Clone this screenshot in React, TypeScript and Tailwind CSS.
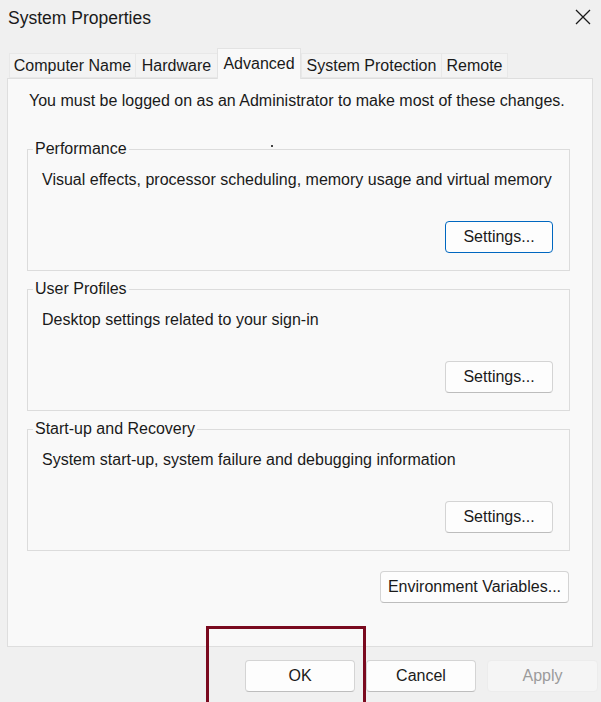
import React from 'react';

const font = { fontFamily: '"Liberation Sans", Arial, sans-serif' };

function Button({ label, focused, disabled, className = '' }: { label: string; focused?: boolean; disabled?: boolean; className?: string }) {
  return (
    <button
      className={
        'flex h-[32px] items-center justify-center rounded-[4px] border text-[16px] ' +
        (focused
          ? 'border-[#0067c0] bg-[#fdfdfd] text-[#1a1a1a] '
          : disabled
            ? 'border-[#ececec] bg-[#f5f5f5] text-[#9b9b9b] '
            : 'border-[#d4d4d4] border-b-[#bdbdbd] bg-[#fdfdfd] text-[#1a1a1a] ') +
        className
      }
    >
      {label}
    </button>
  );
}

function Group({ title, text, focused }: { title: string; text: string; focused?: boolean }) {
  return (
    <div className="relative ml-[19px] mr-[22px] h-[122px] border border-[#dcdcdc]">
      <span className="absolute left-[5px] top-[-10px] bg-[#f9f9f9] px-[2px] text-[16px] leading-[18px] text-[#1a1a1a]">
        {title}
      </span>
      <div className="pl-[14px] pt-[21px] text-[16px] leading-[18px] text-[#1a1a1a]">{text}</div>
      <div className="mt-[32px] flex justify-end pr-[16px]">
        <Button label="Settings..." focused={focused} className="w-[108px]" />
      </div>
    </div>
  );
}

const tabs = [
  { label: 'Computer Name', w: 'w-[126px]' },
  { label: 'Hardware', w: 'w-[82px]' },
  { label: 'Advanced', w: 'w-[84px]', active: true },
  { label: 'System Protection', w: 'w-[140px]' },
  { label: 'Remote', w: 'w-[67px]' },
];

export default function App() {
  return (
    <div className="relative h-[702px] w-[601px] overflow-hidden bg-[#f0f0f0]" style={font}>
      {/* title bar */}
      <div className="flex h-[36px] items-center justify-between pl-[8px] pr-[10px]">
        <span className="text-[17.5px] text-[#1a1a1a]">System Properties</span>
        <svg width="16" height="16" viewBox="0 0 16 16" className="mt-[-2px]">
          <path d="M1 1 L15 15 M15 1 L1 15" stroke="#1a1a1a" strokeWidth="1.3" />
        </svg>
      </div>

      {/* tabs */}
      <div className="mt-[14px] flex h-[28px] items-end pl-[9px]">
        {tabs.map((t) =>
          t.active ? (
            <div
              key={t.label}
              className={
                'relative z-10 mb-[-1px] flex h-[31px] items-start justify-center border border-b-0 border-[#e3e3e3] bg-[#f9f9f9] pt-[3px] text-[16px] text-[#1a1a1a] ' +
                t.w
              }
            >
              {t.label}
            </div>
          ) : (
            <div
              key={t.label}
              className={
                'flex h-[25px] items-center justify-center border border-r-0 border-[#e8e8e8] bg-[#f3f3f3] text-[16px] text-[#1a1a1a] last:border-r ' +
                t.w
              }
            >
              {t.label}
            </div>
          )
        )}
      </div>

      {/* panel */}
      <div className="ml-[7px] h-[569px] w-[586px] border border-[#dedede] bg-[#f9f9f9]">
        <div className="pl-[21px] pt-[13px] text-[16px] leading-[18px] text-[#1a1a1a]">
          You must be logged on as an Administrator to make most of these changes.
        </div>
        <div className="mt-[39px] flex flex-col gap-[18px]">
          <div className="relative">
            <Group title="Performance" text="Visual effects, processor scheduling, memory usage and virtual memory" focused />
            <span className="absolute left-[263px] top-[-4px] h-[2px] w-[2px] bg-[#444]" />
          </div>
          <Group title="User Profiles" text="Desktop settings related to your sign-in" />
          <Group title="Start-up and Recovery" text="System start-up, system failure and debugging information" />
        </div>
        <div className="mt-[20px] flex justify-end pr-[23px]">
          <Button label="Environment Variables..." className="w-[189px]" />
        </div>
      </div>

      {/* dialog buttons */}
      <div className="mt-[13px] flex justify-end gap-[11px] pr-[3px]">
        <Button label="OK" className="w-[110px]" />
        <Button label="Cancel" className="w-[110px]" />
        <Button label="Apply" disabled className="w-[111px]" />
      </div>

      {/* annotation */}
      <div className="pointer-events-none absolute left-[206px] top-[626px] h-[90px] w-[160px] border-[3px] border-[#7a0a1f]" />
    </div>
  );
}
